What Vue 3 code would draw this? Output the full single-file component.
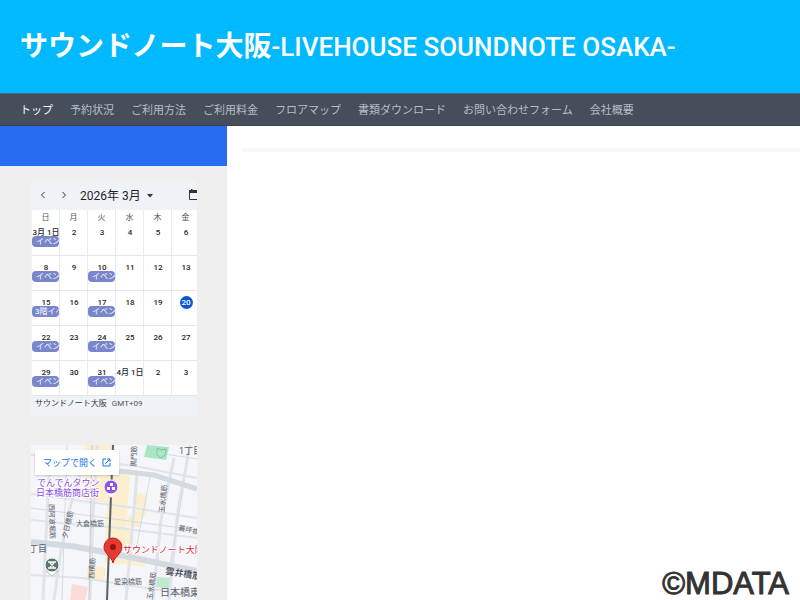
<script setup>
const links = ['トップ', '予約状況', 'ご利用方法', 'ご利用料金', 'フロアマップ', '書類ダウンロード', 'お問い合わせフォーム', '会社概要']
const weekdays = ['日', '月', '火', '水', '木', '金']
const event = 'イベント'
const weeks = [
  [{ day: '3月 1日', event }, { day: '2' }, { day: '3' }, { day: '4' }, { day: '5' }, { day: '6' }],
  [{ day: '8', event }, { day: '9' }, { day: '10', event }, { day: '11' }, { day: '12' }, { day: '13' }],
  [{ day: '15', event: '3階イベント', full: true }, { day: '16' }, { day: '17', event }, { day: '18' }, { day: '19' }, { day: '20', today: true }],
  [{ day: '22', event }, { day: '23' }, { day: '24', event }, { day: '25' }, { day: '26' }, { day: '27' }],
  [{ day: '29', event }, { day: '30' }, { day: '31', event }, { day: '4月 1日' }, { day: '2' }, { day: '3' }],
]
</script>

<template>
  <div class="page">
    <header class="banner">
      <h1>サウンドノート大阪<span class="latin">-LIVEHOUSE SOUNDNOTE OSAKA-</span></h1>
    </header>
    <nav class="nav">
      <a v-for="(link, i) in links" :key="link" href="#" :class="{ current: i === 0 }">{{ link }}</a>
    </nav>
    <div class="body">
      <aside class="sidebar">
        <div class="accent"></div>
        <section class="calendar">
          <div class="cal-head">
            <button type="button" aria-label="前の月">
              <svg width="6" height="8" viewBox="0 0 6 8"><path d="M4.500 1 1.500 4l3 3" /></svg>
            </button>
            <button type="button" aria-label="次の月">
              <svg width="6" height="8" viewBox="0 0 6 8"><path d="m1.500 1 3 3-3 3" /></svg>
            </button>
            <button type="button" class="month">2026年 3月
              <svg width="6" height="4" viewBox="0 0 6 4"><path class="solid" d="M0 0h6L3 3.500z" /></svg>
            </button>
            <button type="button" class="view" aria-label="表示">
              <svg width="12" height="12" viewBox="0 0 12 12"><path d="M1.500 2v8.500h9V2z" /><path class="solid" d="M1 1h10v3H1zM3 0h1.500v2H3z" /></svg>
            </button>
          </div>
          <div class="cal-grid">
            <table>
              <thead>
                <tr><th v-for="w in weekdays" :key="w" scope="col">{{ w }}</th></tr>
              </thead>
              <tbody>
                <tr v-for="(week, r) in weeks" :key="r">
                  <td v-for="cell in week" :key="cell.day">
                    <div class="day"><span :class="{ today: cell.today }">{{ cell.day }}</span></div>
                    <div v-if="cell.event" class="event" :class="{ full: cell.full }">{{ cell.event }}</div>
                  </td>
                </tr>
              </tbody>
            </table>
          </div>
          <p class="cal-foot">サウンドノート大阪 <span>GMT+09</span></p>
        </section>

        <section class="map">
          <svg class="map-art" viewBox="31 445 166 155" preserveAspectRatio="xMinYMin slice">
            <rect x="31" y="445" width="166" height="155" fill="#f5f6fa" />
            <g fill="#fcefd0">
              <path d="M85 445h30l-1 27 16 2-4 52-6 40-16-3 3-60-24-4z" />
              <path d="m134 493 14 2-3 22-13-1zM113 475l17 3-3 29-15-2zM111 508l17 3-2 14-16-1zM128 516l13 1-1 10-13-1zM111 526l21 2-2 20-20-2zM110 551l36 5-1 11-36-5zM88 565l18 3-2 14-18-2z" />
            </g>
            <path d="m147 445 22 2-3 13-22-3z" fill="#a9e6c4" />
            <path d="m157 577 15 1-3 11-13-2z" fill="#bfe8cf" />
            <path d="m72 584 16 3-3 13H70z" fill="#fbdcd8" />
            <g fill="none" stroke="#dfe3ea" stroke-width="3">
              <path d="m31 455 55 5 49 6 62 12M31 494l50 7 47 6 69 11M31 520l50 5 30 2 86 11M31 575l52 3 25 4 89 14" stroke-width="2" />
              <path d="m49 475-6 125M80 475 68 514l-7 37-7 49M97 445l-4 68-3 87M137 475l-6 68-5 57M174 458l-13 62-8 80M190 445l-12 65-9 90" />
            </g>
            <g fill="none" stroke="#d4dae2">
              <path d="m31 542 40 4 39 7 87 18" stroke-width="6" />
              <path d="m119 471 35 4 43 14" stroke-width="5" />
              <path d="m67 445-5 155M31 508l166 22M150 477l-13 67M183 490l-13 75M197 459l-45-7" />
            </g>
            <path d="m113 445-2 50-4 105" fill="none" stroke="#59616b" stroke-width="2" />
            <path d="m92 445-3 155" fill="none" stroke="#c3c9d2" />
            <path d="m157 448 4 2 5-1-1 6-4 3-4-3z" fill="none" stroke="#78c69c" />
            <g class="streets">
              <text x="179" y="454" class="area">1丁目</text>
              <text x="76" y="526">大倉橋筋</text>
              <text x="114" y="584">愛染橋筋</text>
              <text x="178" y="530" transform="rotate(13 178 530)">叢坪橋筋</text>
              <text x="29" y="552" class="area">丁目</text>
              <text x="165" y="574" class="strong" transform="rotate(9 165 574)">雲井橋筋</text>
              <text x="160" y="596" class="district">日本橋東</text>
              <text x="136" y="467" transform="rotate(-88 136 467)">黒門筋</text>
              <text x="164" y="513" transform="rotate(-84 164 513)">玉水橋筋</text>
              <text x="152" y="600" transform="rotate(-82 152 600)">玉水橋筋</text>
              <text x="67" y="539" transform="rotate(-77 67 539)">夕日橋筋</text>
              <text x="49" y="504" transform="rotate(88 49 504)">西阿波堀筋</text>
              <text x="94" y="579" transform="rotate(-87 94 579)">西横筋</text>
            </g>
            <g class="shops">
              <text x="37" y="486">でんでんタウン</text>
              <text x="36" y="496">日本橋筋商店街</text>
            </g>
            <path d="m107 492 4 6 4-6z" fill="#fff" />
            <circle cx="111" cy="487" r="7" fill="#9252e8" stroke="#fff" />
            <path d="M110 483h3v3h-3zM107 487h3v3h-3zM112 487h3v3h-3z" fill="#fff" />
            <path d="m46 571 6 5 6-5z" fill="#fff" stroke="#b5bdc2" />
            <circle cx="52" cy="565" r="7" fill="#59756f" stroke="#fff" />
            <path d="M48 562h8M48 568h8M50 563l4 4M54 563l-4 4" stroke="#fff" stroke-width="1.500" />
            <path d="M113 563c-1-6-9-9-9-16a9 9 0 0 1 18 0c0 7-8 10-9 16z" fill="#e83a30" stroke="#c5221f" />
            <circle cx="113" cy="547" r="3" fill="#8e1612" />
            <text class="venue" x="123" y="553">サウンドノート大阪</text>
          </svg>
          <a class="open-map" href="#">マップで開く
            <svg width="9" height="9" viewBox="0 0 9 9"><path d="M4 1H1v7h7V5M5 1h3v3M8 1 3.500 5.500" /></svg>
          </a>
        </section>
      </aside>
      <main class="content"><hr /></main>
    </div>
    <div class="mark">©MDATA</div>
  </div>
</template>

<style>
body { margin: 0; background: #fff; }
</style>

<style scoped>
* { box-sizing: border-box; }
.page {
  position: relative;
  display: flex;
  flex-direction: column;
  min-height: 100vh;
  overflow: hidden;
  font-family: Roboto, "Noto Sans CJK JP", sans-serif;
}
.banner {
  display: flex;
  align-items: center;
  height: 93px;
  padding: 0 20px 2px;
  background: #00b9ff;
}
h1 {
  margin: 0;
  color: #fff;
  font: 700 28px/40px "Noto Sans CJK JP", sans-serif;
  white-space: nowrap;
}
.latin { font-family: Roboto, sans-serif; font-weight: 500; font-size: 26px; }
.nav {
  display: flex;
  align-items: center;
  gap: 17px;
  height: 33px;
  padding: 0 20px 2px;
  background: #464d5b;
  border-top: 1px solid #3a6f8b;
  border-bottom: 1px solid #3c424e;
}
.nav a {
  color: #b9bdc4;
  font: 11px/16px "Noto Sans CJK JP", sans-serif;
  text-decoration: none;
  white-space: nowrap;
}
.nav a.current { color: #fff; }
.body { display: flex; flex: 1; }
.sidebar { flex: 0 0 227px; min-width: 0; background: #efefef; }
.accent { height: 40px; background: #266df3; }
.calendar {
  margin: 15px 30px 0 31px;
  overflow: hidden;
  background: #eff3f8;
  color: #1f1f1f;
}
.cal-head { display: flex; align-items: center; height: 29px; padding: 0 0 2px 9px; gap: 15px; }
button {
  display: flex;
  align-items: center;
  flex: none;
  padding: 0;
  border: 0;
  background: none;
  color: #1f1f1f;
}
svg { display: block; }
button path { fill: none; stroke: #333; }
button path.solid { fill: #333; stroke: none; }
.month { gap: 6px; margin: 2px 0 0 -2px; font: 12px/16px Roboto, "Noto Sans CJK JP", sans-serif; white-space: nowrap; }
.view { margin-left: 20px; }
.cal-grid { padding-left: 1px; overflow: hidden; }
table { width: 168px; table-layout: fixed; border-collapse: separate; border-spacing: 0; background: #fff; }
th {
  height: 11px;
  padding: 5px 0 0;
  border-right: 1px solid #e8ebef;
  color: #555;
  font-size: 8px;
  font-weight: 400;
  line-height: 6px;
}
td {
  height: 35px;
  padding: 6px 0 0;
  border-right: 1px solid #e8ebef;
  border-bottom: 1px solid #e3e6ea;
  vertical-align: top;
}
.day { display: flex; justify-content: center; height: 9px; padding-left: 1px; font-size: 8px; font-weight: 500; line-height: 11px; white-space: nowrap; }
.today { width: 13px; height: 13px; margin-top: -1px; border-radius: 50%; background: #0b57d0; color: #fff; line-height: 13px; text-align: center; }
.event {
  height: 11px;
  padding-left: 4px;
  overflow: hidden;
  border-radius: 4px;
  background: #7986cb;
  color: #fff;
  font-size: 8px;
  line-height: 11px;
  white-space: nowrap;
}
.event.full { padding-left: 3px; }
.cal-foot { margin: 0; padding: 0 4px 5px; color: #333; font-size: 8px; line-height: 15px; white-space: nowrap; }
.cal-foot span { margin-left: 3px; color: #555; }
.map { position: relative; height: 155px; margin: 29px 30px 0 31px; overflow: hidden; }
.map-art { width: 100%; height: 100%; }
.streets text { fill: #5b626c; font-size: 7px; }
.streets .area { font-size: 9px; }
.streets .district { font-size: 10px; }
.streets .strong { fill: #3c434c; font-size: 9px; font-weight: 500; }
.shops text { fill: #8a4be0; stroke: #fff; stroke-width: 2px; paint-order: stroke; font-size: 9px; }
.venue { fill: #d11f3a; stroke: #fff; stroke-width: 2px; paint-order: stroke; font-size: 9px; }
.open-map {
  position: absolute;
  top: 5px;
  left: 4px;
  display: flex;
  align-items: center;
  gap: 5px;
  height: 25px;
  padding: 0 8px;
  background: #fff;
  box-shadow: 0 1px 2px #0003;
  color: #1a73e8;
  font-size: 9px;
  text-decoration: none;
  white-space: nowrap;
}
.open-map path { fill: none; stroke: #1a73e8; }
.content { flex: 1; padding: 22px 0 0 15px; }
hr { height: 4px; margin: 0; border: 0; background: #f8f8f8; }
.mark {
  position: absolute;
  right: 11px;
  bottom: 0;
  color: #333;
  font: 31px/32px "Liberation Sans", sans-serif;
  -webkit-text-stroke: 1px #333;
}
</style>
